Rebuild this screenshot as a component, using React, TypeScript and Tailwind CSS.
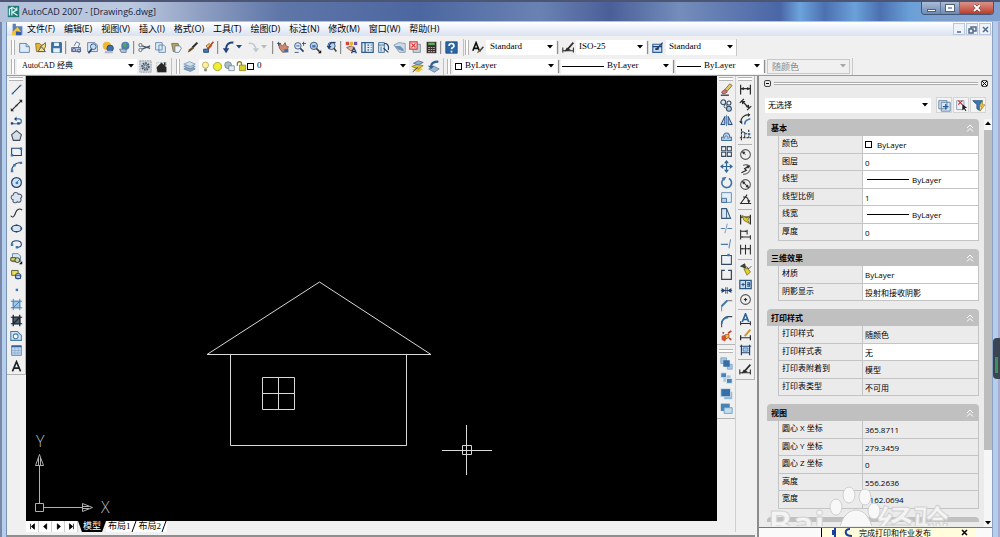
import type { ReactNode } from 'react'

const NAVY = '#23406f'
const BLUE = '#3b78b5'
const SKY = '#a9cbe8'
const DARK = '#2b2b2b'

const icons: Record<string, ReactNode> = {
  app: (
    <>
      <path d="M1 1h14v14H1z" fill="#1f7a78" />
      <path d="M3 13V5l3-2v10M7 3l5 3-5 3 6 4M12 3v4" stroke="#d9f3ec" strokeWidth="1.6" />
    </>
  ),
  doc: (
    <>
      <path d="M2 1h4v3h8v10H2z" fill="#5d7fb5" />
      <path d="M1 12 8 5l6 8-3 2H1z" fill="#f2c53c" />
      <path d="M6 10l7 1v4H6z" fill="#2f5aa8" />
    </>
  ),
  new: <path d="M2 3h8l4 4v7H2z M10 3v4h4" stroke="#52749b" fill="#dcecfa" />,
  open: (
    <>
      <path d="M2 3h5l2 2h4v8H3z" fill="#e5b437" stroke="#8d6b1c" />
      <path d="M7 8 14 2v6M5 13l4-6 5 6z" stroke="#3c4c5f" fill="#f8df80" />
    </>
  ),
  save: (
    <>
      <path d="M2 2h12v12H2z" fill="#3f74a8" stroke="#27527e" />
      <path d="M5 2h6v4H5zM4 9h8v5H4z" fill="#e7f1fa" />
    </>
  ),
  print: (
    <>
      <path d="M5 6 8 1l4 2-2 5" stroke="#4d5d86" fill="#eef3fb" />
      <path d="M2 8h11v5H2z" fill="#b8c3df" stroke="#4d5d86" />
      <circle cx="5" cy="11" r="2" stroke="#4d5d86" />
      <circle cx="11" cy="12" r="2" stroke="#4d5d86" />
    </>
  ),
  preview: (
    <>
      <path d="M2 2h9l3 3v8H2z" fill="#dbe8f6" stroke="#56749b" />
      <circle cx="9" cy="7" r="3.5" fill="#c4dff2" stroke={NAVY} />
      <path d="M7 10l-4 5" stroke={NAVY} strokeWidth="2" />
    </>
  ),
  publish: (
    <>
      <circle cx="6" cy="6" r="5" fill="#f0b832" />
      <circle cx="10" cy="9" r="4" fill="#3d6fae" stroke="#27446f" />
      <path d="M4 12h8l2 3H3z" fill="#b9b9c6" />
    </>
  ),
  globe: (
    <>
      <circle cx="9" cy="6" r="5" fill="#4b80b4" />
      <path d="M6 3c3-2 6 0 4 3s-3 2-4-3" fill="#5fa35a" />
      <path d="M2 10h8v4H4z" fill="#b7c6da" stroke="#5c6f88" />
    </>
  ),
  cut: (
    <>
      <path d="M5 6l10 3M5 10l10-4" stroke="#45566b" strokeWidth="1.500" />
      <circle cx="3" cy="5" r="2" stroke="#45566b" />
      <circle cx="3" cy="11" r="2" stroke="#45566b" />
    </>
  ),
  copy: <path d="M2 2h8v9H2zM6 5h6l2 2v7H6z" fill="#dcecfa" stroke="#5a7da4" />,
  paste: (
    <>
      <path d="M2 3h8l2 8-8 2z" fill="#b6a26a" stroke="#766a43" />
      <path d="M6 6h6l2 3-3 5H6z" fill="#edf3fa" stroke="#6b7b8d" />
    </>
  ),
  brush: (
    <>
      <path d="M8 8 14 2" stroke="#2b2b2b" strokeWidth="2.500" />
      <path d="M8 7l2 2-5 4-3 1 2-4z" fill="#6b4a27" />
    </>
  ),
  block: (
    <>
      <path d="M5 6l4-3 3 3-4 4z" fill="#e8c75c" stroke="#8b5a2b" />
      <path d="M14 1 7 10" stroke="#b5402a" strokeWidth="2" />
      <path d="M2 10h6v4H2z" fill={BLUE} stroke={NAVY} />
    </>
  ),
  undo: (
    <>
      <path d="M14 2C8 1 4 5 5 13" stroke="#24467c" strokeWidth="2.500" />
      <path d="M1 9h8l-4 6z" fill="#24467c" />
    </>
  ),
  redo: (
    <>
      <path d="M2 3c6-1 9 3 9 9" stroke="#c3c7cc" strokeWidth="2" />
      <path d="M7 9h8l-4 5z" fill="#c3c7cc" />
    </>
  ),
  pan: (
    <>
      <path d="M2 3l5 3 3-4 1 4 3 1-2 6-5 1-4-5z" fill="#c88b72" stroke="#8d4a3b" />
      <path d="M9 10h5v4H9z" fill="#3f6faa" />
      <path d="M2 1v5M0 3h5" stroke={NAVY} />
    </>
  ),
  zoomrt: (
    <>
      <circle cx="6" cy="6" r="4" fill="#d8eaf7" stroke={NAVY} />
      <path d="M9 9l4 4" stroke={NAVY} strokeWidth="2" />
      <path d="M13 1v5M11 3h5M4 6h4M2 14h5" stroke={NAVY} />
    </>
  ),
  zoomwin: (
    <>
      <circle cx="6" cy="6" r="4.500" fill="#b7d1e8" stroke={NAVY} />
      <path d="M4 5h4v3H4z" fill={BLUE} />
      <path d="M9 9l4 4" stroke="#444" strokeWidth="2" />
      <path d="M11 15h4v-4z" fill="#111" />
    </>
  ),
  zoomprev: (
    <>
      <circle cx="8" cy="6" r="4.500" fill="#b7d1e8" stroke={NAVY} />
      <path d="M13 2C8 1 5 3 5 8" stroke={NAVY} strokeWidth="1.500" />
      <path d="M2 6h6l-3 4z" fill={NAVY} />
      <path d="M11 9l3 4" stroke="#444" strokeWidth="2" />
    </>
  ),
  props: (
    <>
      <path d="M1 1h4v4H1z" fill="#d4413a" />
      <path d="M6 1h4v4H6z" fill="#e5b437" />
      <path d="M11 1h4v4h-4z" fill="#6f4bb0" />
      <path d="M2 8l6-2 4 4-5 2z" fill="#dfb49a" stroke="#75503e" />
      <path d="M8 15l3-7 3 7M9 13h4" stroke={NAVY} strokeWidth="1.500" />
    </>
  ),
  center: (
    <>
      <path d="M1 2h14v12H1z" fill="#e3eef8" stroke="#305d87" strokeWidth="1.500" />
      <path d="M5 2v12M8 5h2M12 5h1M8 8h2M12 8h1M8 11h2M12 11h1" stroke="#305d87" strokeWidth="1.500" />
    </>
  ),
  palettes: (
    <>
      <path d="M2 2h7v12H2z" fill="#dceaf6" stroke="#305d87" />
      <path d="M2 5h7M5 7v6" stroke="#305d87" />
      <path d="M9 3c4 0 6 3 5 8M8 9l6 5" stroke={NAVY} strokeWidth="1.500" />
    </>
  ),
  sheet: (
    <>
      <path d="M1 5l6-3 8 1v11H8z" fill="#d0dae6" stroke="#8292a5" />
      <path d="M2 6h7l4 4v3L6 10z" fill="#6d94ba" />
    </>
  ),
  markup: (
    <>
      <path d="M5 4h9v10H5z" fill="#c9d1dc" stroke="#7b8490" />
      <path d="M1 1h9v9H1z" fill="#fbe2e0" stroke="#d83a3a" strokeWidth="1.500" />
      <path d="M3 3l5 5M8 3 3 8" stroke="#d83a3a" strokeWidth="1.500" />
    </>
  ),
  calc: (
    <>
      <path d="M2 1h12v14H2z" fill="#39302e" />
      <path d="M4 2h8v3H4z" fill="#5bb25b" />
      <path d="M4 8h8M4 10.500h8M4 13h8" stroke="#d8a09a" strokeWidth="1.400" strokeDasharray="2 1" />
    </>
  ),
  help: (
    <>
      <path d="M1 1h14v14H1z" fill="#2a65a4" stroke="#1c477a" />
      <path d="M5 6c0-4 6-4 6 0 0 2-3 2-3 4M8 12v2" stroke="#fff" strokeWidth="2" />
    </>
  ),
  textstyle: (
    <>
      <path d="M1 12 5 2l4 10M3 9h5" stroke="#111" strokeWidth="2" />
      <path d="M9 13l5-6" stroke="#4a4a4a" strokeWidth="2" />
      <path d="M8 11l3 2-5 2z" fill="#8a6a3c" />
    </>
  ),
  dimstyle: (
    <>
      <path d="M1 8v6M14 8v6M1 12h13" stroke={DARK} strokeWidth="1.300" />
      <path d="M7 10 14 2" stroke={DARK} strokeWidth="2" />
      <path d="M3 13l3-5 5 3z" fill={DARK} />
    </>
  ),
  tablestyle: (
    <>
      <path d="M1 4h11v10H1z" fill="#c9def1" stroke="#2f62a0" strokeWidth="1.500" />
      <path d="M1 7h11M5 11l8-9" stroke={NAVY} strokeWidth="1.500" />
      <path d="M4 9l5-2-1 4H4z" fill={NAVY} />
    </>
  ),
  gear: (
    <>
      <path d="M1 1h14v14H1z" fill="#cfd6dc" stroke="#8a949d" strokeDasharray="2 1" />
      <circle cx="8" cy="8" r="4" stroke="#43566a" strokeWidth="2.500" strokeDasharray="2 1" />
      <circle cx="8" cy="8" r="2" stroke="#43566a" />
    </>
  ),
  home: (
    <>
      <path d="M2 3h12v12H2z" stroke="#9aa" strokeDasharray="1 1" />
      <path d="M2 9l6-6 6 6v6H3z" fill="#262626" />
      <path d="M11 3h2v4h-2z" fill="#262626" />
    </>
  ),
  layers: (
    <>
      <path d="M1 11l7-3 7 3-6 3z" fill="#8da9c8" stroke="#60809f" />
      <path d="M1 8l7-3 7 3-6 3z" fill="#aec5dc" stroke="#60809f" />
      <path d="M1 5l7-3 7 3-6 3z" fill="#d3e1ee" stroke="#7f9ab5" />
    </>
  ),
  bulb: (
    <>
      <circle cx="8" cy="6" r="4.500" fill="#fbf39a" stroke="#a89842" />
      <path d="M6 11h4v4H6z" fill="#8b8b8b" />
    </>
  ),
  sun: <circle cx="8" cy="8" r="6" fill="#f0ee2e" stroke="#8b8a20" />,
  vpfreeze: (
    <>
      <circle cx="6" cy="6" r="5" fill="#a9bfca" stroke="#5e7886" />
      <path d="M7 7h8v7H7z" fill="#e6edf3" stroke="#5e7886" />
    </>
  ),
  lock: (
    <>
      <path d="M2 7V4c0-4 6-4 6 0v3" stroke="#8b8420" strokeWidth="2" />
      <path d="M5 6h9v8H5z" fill="#d8cf2e" stroke="#807a1c" />
    </>
  ),
  layercur: (
    <>
      <path d="M1 12l7-3 7 2-6 4z" fill="#e8c93a" />
      <path d="M1 8l7-3 7 2-6 4z" fill="#d8bd3f" stroke="#8b8137" />
      <path d="M3 4l6-3 6 2-6 3z" fill="#93b2d0" stroke="#507090" />
      <path d="M2 15l6-6" stroke={DARK} />
    </>
  ),
  layerprev: (
    <>
      <path d="M2 11l7-3 6 3-6 4z" fill="#9bb5cf" stroke="#5c7d9e" />
      <path d="M14 2c-7 0-9 2-9 6" stroke="#315f93" strokeWidth="2.500" />
      <path d="M1 7h8l-4 4z" fill="#315f93" />
    </>
  ),

  line: (
    <>
      <path d="M3 13 13 3" stroke={NAVY} strokeWidth="1.300" />
      <path d="M2 12h2v2H2zM12 2h2v2h-2z" fill={BLUE} />
    </>
  ),
  xline: (
    <>
      <path d="M2 14 14 2" stroke={DARK} strokeWidth="1.500" />
      <path d="M1 11v4h4zM11 1h4v4zM7 7h2v2H7z" fill={DARK} />
    </>
  ),
  pline: (
    <>
      <path d="M2 12h9c4 0 4-6 0-6H7" stroke={BLUE} strokeWidth="1.500" />
      <path d="M1 10h3v3H1zM9 10h3v3H9zM8 3v6L5 6z" fill={NAVY} />
    </>
  ),
  polygon: <path d="M8 2l6 5-2 7H4L2 7z" fill="#d6dfe8" stroke="#3f4a57" strokeWidth="1.300" />,
  rect: (
    <>
      <path d="M2 4h12v9H2z" fill="#edf3f9" stroke={NAVY} strokeWidth="1.300" />
      <path d="M1 11h3v3H1zM12 3h3v3h-3z" fill={BLUE} />
    </>
  ),
  arc: (
    <>
      <path d="M2 14C2 8 6 3 14 3" stroke={NAVY} strokeWidth="1.300" />
      <path d="M1 12h3v3H1zM4 5h3v3H4zM12 2h3v3h-3z" fill={BLUE} />
    </>
  ),
  circle: (
    <>
      <circle cx="8" cy="8" r="6" fill="#d3e5f3" stroke={NAVY} strokeWidth="1.500" />
      <path d="M8 8l4-4" stroke={BLUE} />
      <path d="M7 7h3v3H7z" fill={BLUE} />
    </>
  ),
  revcloud: <path d="M4 5c0-4 6-4 6-1 4-1 6 3 3 5 2 4-2 6-4 4-2 3-7 1-5-2-4-1-3-6 0-6z" fill="#dbe3ef" stroke="#4b5a78" strokeWidth="1.300" />,
  spline: <path d="M1 12c3 4 5-1 6-4s4-6 8-3" stroke={DARK} strokeWidth="1.300" />,
  ellipse: (
    <>
      <ellipse cx="8" cy="8" rx="6" ry="4" fill="#d9e6f1" stroke={NAVY} strokeWidth="1.500" />
      <path d="M1 7h2v2H1zM13 7h2v2h-2zM7 3h2v2H7zM7 11h2v2H7z" fill={NAVY} />
    </>
  ),
  ellarc: (
    <>
      <path d="M2 9c0-6 12-6 12 0 0 3-3 4-6 4" stroke={NAVY} strokeWidth="1.300" />
      <path d="M1 8h3v3H1zM7 11h3v3H7z" fill={BLUE} />
    </>
  ),
  insert: (
    <>
      <path d="M3 2h7l3 3v7H3z" fill="#d7e6f3" stroke="#54759a" />
      <path d="M1 7h6v4H1z" fill="#e9dd55" stroke={DARK} />
      <circle cx="9" cy="10" r="3" fill="#c7d9a6" stroke={DARK} />
      <path d="M11 15h4v-4z" fill="#111" />
    </>
  ),
  mkblock: (
    <>
      <path d="M2 3h8v6H2z" fill="#e9dd55" stroke="#3b4d2b" />
      <circle cx="10" cy="10" r="3.500" fill="#b7cfe6" stroke={NAVY} />
      <path d="M7 9h6v4H7z" stroke={NAVY} />
    </>
  ),
  point: <path d="M7 7h3v3H7z" fill={BLUE} />,
  hatch: (
    <>
      <path d="M3 3h10v10H3z" fill="#9fc4e6" />
      <path d="M1 4h14M1 12h14M4 1v14M12 1v14M4 12l8-8" stroke="#4677a8" />
    </>
  ),
  gradient: (
    <>
      <path d="M3 3h10v10H3z" fill="#56616e" />
      <path d="M1 4h14M1 12h14M4 1v14M12 1v14M4 12l8-8" stroke="#1e2732" strokeWidth="1.500" />
    </>
  ),
  region: (
    <>
      <path d="M1 3h8l5 5v6H1z" fill="#d5e6f4" stroke="#487ba9" strokeWidth="1.300" />
      <circle cx="7" cy="9" r="3" fill="#fff" stroke="#487ba9" strokeWidth="1.300" />
    </>
  ),
  table: (
    <>
      <path d="M2 2h12v12H2z" fill="#c3d6ee" stroke="#5379a8" />
      <path d="M2 3h12" stroke="#365f96" strokeWidth="2" />
      <path d="M6 4v10M10 4v10M2 8h12M2 11h12" stroke="#8daed2" />
    </>
  ),
  mtext: <path d="M3 14 8 2l5 12M5 10h6" stroke="#222" strokeWidth="2" />,

  erase: (
    <>
      <path d="M6 8 12 1l3 2-6 7z" fill="#e3c46a" stroke="#7a6a30" />
      <path d="M2 11l4-3 3 3-3 2H3z" fill="#d8777a" stroke="#804040" />
      <path d="M1 15h10" stroke={DARK} strokeWidth="1.500" />
    </>
  ),
  copyobj: (
    <>
      <circle cx="4" cy="4" r="3" fill="#dbe6f0" stroke="#34495f" strokeWidth="1.300" />
      <circle cx="11" cy="5" r="2.500" stroke="#34495f" strokeWidth="1.300" />
      <circle cx="7" cy="9" r="2" stroke="#34495f" />
      <circle cx="11" cy="12" r="3" fill={SKY} stroke="#34495f" strokeWidth="1.300" />
    </>
  ),
  mirror: (
    <>
      <path d="M6 3v10H1zM10 3v10h5z" fill="#b6cfe6" stroke={NAVY} strokeWidth="1.200" />
      <path d="M8 1v14" stroke={BLUE} />
    </>
  ),
  offset: (
    <>
      <path d="M2 13V9h2c0-7 8-7 8 0h2v4z" fill="#b8d0e7" stroke="#42719f" strokeWidth="1.300" />
      <path d="M5 11c0-5 5-5 5 0" stroke="#42719f" />
    </>
  ),
  array: <path d="M2 2h5v5H2zM9 2h5v5H9zM2 9h5v5H2zM9 9h5v5H9z" fill="#edf2f8" stroke="#34495f" strokeWidth="1.300" />,
  move: (
    <>
      <path d="M8 2v12M2 8h12" stroke="#2f6599" strokeWidth="1.500" />
      <path d="M5 4l3-4 3 4zM5 12l3 4 3-4zM4 5 0 8l4 3zM12 5l4 3-4 3z" fill="#2f6599" />
    </>
  ),
  rotate: (
    <>
      <path d="M4 4a6 6 0 1 0 7-1" stroke="#3f74a8" strokeWidth="2" />
      <path d="M2 2l6-1-3 5z" fill="#3f74a8" />
    </>
  ),
  scale: (
    <>
      <path d="M2 2h12v12H2z" fill="#e4eef7" stroke="#537ea9" />
      <path d="M2 9h6v5H2z" fill="#b8d2ea" stroke="#315f93" />
    </>
  ),
  stretch: (
    <>
      <path d="M2 2h6l5 12H2z" fill="#d8e6f3" stroke="#34557a" strokeWidth="1.300" />
      <path d="M8 2v12" stroke="#34557a" />
    </>
  ),
  trim: (
    <>
      <path d="M1 8h5M9 8h6" stroke="#547ba2" strokeWidth="1.300" />
      <path d="M9 2 6 14" stroke="#6a8cad" />
    </>
  ),
  extend: (
    <>
      <path d="M1 9h9" stroke="#315f93" strokeWidth="1.300" />
      <path d="M13 3l-2 11" stroke="#6a8cad" strokeWidth="1.300" />
    </>
  ),
  breakpt: (
    <>
      <path d="M2 3h12v11H2z" fill="#edf2f7" stroke="#34495f" strokeWidth="1.300" />
      <path d="M9 1h3v3H9z" fill={BLUE} />
    </>
  ),
  break: <path d="M6 3H2v11h12V3h-4" stroke="#34495f" strokeWidth="1.500" />,
  join: (
    <>
      <path d="M1 8h14M7 4v8M9 4v8" stroke={NAVY} />
      <path d="M2 5l5 3-5 3zM14 5L9 8l5 3z" fill={NAVY} />
    </>
  ),
  chamfer: (
    <>
      <path d="M2 15V8l6-6h7" stroke="#8a8a8a" strokeWidth="1.300" />
      <path d="M2 9l7-7" stroke={BLUE} strokeWidth="2" />
    </>
  ),
  fillet: (
    <>
      <path d="M2 15v-4c0-5 4-9 8-9h5" stroke="#34495f" strokeWidth="1.300" />
      <path d="M2 11c0-5 4-8 8-8" stroke="#2f6fb0" strokeWidth="2" />
    </>
  ),
  explode: (
    <>
      <path d="M2 7l4-1 3 3-3 5-4-2z" fill="#d4502f" />
      <path d="M6 6l5-1v4l-4 2z" fill="#efc13c" stroke="#a4492c" />
      <path d="M10 4l4-3M11 10l3 2M3 3l2 1" stroke="#b2402b" strokeWidth="2" />
    </>
  ),
  front: (
    <>
      <path d="M1 1h7v7H1zM9 9h6v6H9z" fill="#a8c8e2" stroke="#7ba4c8" />
      <path d="M4 4h8v8H4z" fill="#356fa5" />
    </>
  ),
  back: (
    <>
      <path d="M4 4h9v8H4z" fill="#a8c8e2" />
      <path d="M1 1h7v6H1zM8 8h7v6H8z" fill="#4a82b4" stroke="#e7f0f8" />
    </>
  ),
  above: (
    <>
      <path d="M5 6h10v9H5z" fill="#8fb7d8" />
      <path d="M1 2h12v10H1z" fill="#356fa5" stroke="#dbe8f3" />
    </>
  ),
  under: (
    <>
      <path d="M1 2h11v9H1z" fill="#4a82b4" />
      <path d="M5 7h10v7H5z" fill="#c3dcef" stroke="#6796be" />
    </>
  ),

  dimlin: (
    <>
      <path d="M2 2v12M14 2v12M2 7h12" stroke={DARK} strokeWidth="1.500" />
      <path d="M2 7l4-2v4zM14 7l-4-2v4z" fill={DARK} />
    </>
  ),
  dimali: (
    <>
      <path d="M4 4l8 8M1 6l5-5M10 15l5-5" stroke={DARK} strokeWidth="1.500" />
      <path d="M3 3l5 1-4 4zM13 12l-5-1 4-3z" fill={DARK} />
    </>
  ),
  dimarc: (
    <>
      <path d="M2 12C2 6 6 2 13 2" stroke={DARK} strokeWidth="1.500" />
      <path d="M7 14c0-4 2-6 7-7" stroke={BLUE} strokeWidth="2" />
      <path d="M0 10h4v4zM11 0v5l3-3z" fill={DARK} />
    </>
  ),
  dimord: (
    <>
      <path d="M3 1v14M1 12h14M3 5h4v7M7 7h5v5M12 2v5" stroke={DARK} strokeDasharray="3 1" strokeWidth="1.300" />
      <path d="M6 6h2v2H6zM11 6h3v3h-3z" fill={BLUE} />
    </>
  ),
  dimrad: (
    <>
      <circle cx="8" cy="8" r="6" stroke="#555" strokeWidth="1.300" />
      <path d="M8 8 4 5" stroke={DARK} />
      <path d="M4 4l4 1-3 3z" fill={DARK} />
    </>
  ),
  dimjog: (
    <>
      <path d="M5 3c6-3 11 2 8 7-2 3-5 4-8 4" stroke="#777" strokeWidth="1.300" />
      <path d="M3 12l6-3-2-2 5-3" stroke={DARK} strokeWidth="1.500" />
      <path d="M9 3h5l-3 4z" fill={DARK} />
    </>
  ),
  dimdia: (
    <>
      <circle cx="8" cy="8" r="6" stroke="#555" strokeWidth="1.300" />
      <path d="M4 4l8 8" stroke={DARK} strokeWidth="1.300" />
      <path d="M4 4l4 1-3 3zM12 12l-4-1 3-3z" fill={DARK} />
    </>
  ),
  dimang: (
    <>
      <path d="M10 2 2 13h13M5 5c5-1 7 2 7 7" stroke={DARK} strokeWidth="1.300" />
      <path d="M10 9h4l-2 4z" fill={DARK} />
    </>
  ),
  qdim: (
    <>
      <path d="M2 2v12M14 2v12M2 5h12" stroke={DARK} strokeWidth="1.500" />
      <path d="M4 3l5 3 4-2-2 5 2 4-7-4z" fill="#e4c928" stroke="#6e6a24" />
    </>
  ),
  dimbase: <path d="M2 2v12M10 2v6M14 9v5M2 4h8M2 11h12M8 3v2M4 10v2" stroke={DARK} strokeWidth="1.300" />,
  dimcont: <path d="M2 2v12M8 2v12M14 2v12M2 7h12M4 6v2M12 6v2" stroke={DARK} strokeWidth="1.300" />,
  qleader: (
    <>
      <path d="M2 4l5-3 1 5z" fill="#2f5a1c" stroke={DARK} />
      <path d="M6 7h5l3 4-4 4z" fill="#e5d32a" stroke="#6e6a24" />
      <path d="M8 4l4 3 3-3" stroke={DARK} />
    </>
  ),
  tolerance: (
    <>
      <path d="M1 3h14v10H1z" fill="#c8ddf0" stroke="#29577f" strokeWidth="1.500" />
      <path d="M8 3v10M3 8h4M5 6v4M10 6h3v4h-3M10 8h3" stroke="#29577f" strokeWidth="1.300" />
    </>
  ),
  cmark: (
    <>
      <circle cx="8" cy="8" r="6" stroke="#555" strokeWidth="1.300" />
      <path d="M8 6v4M6 8h4" stroke={DARK} strokeWidth="1.500" />
    </>
  ),
  dimedit: (
    <>
      <path d="M4 11 8 1l4 10M6 8h4" stroke="#28619b" strokeWidth="2" />
      <path d="M2 10v5M14 10v5M2 13h12" stroke={DARK} strokeWidth="1.300" />
    </>
  ),
  dimtedit: (
    <>
      <path d="M2 9v6M14 9v6M2 12h12" stroke={DARK} strokeWidth="1.500" />
      <path d="M7 10 14 2" stroke="#c99a38" strokeWidth="2.500" />
    </>
  ),
  dimupdate: (
    <>
      <path d="M5 6h6v4H5z" fill={SKY} stroke={BLUE} />
      <path d="M3 2v13M13 2v13M1 4h14M3 12h10" stroke={NAVY} strokeWidth="1.500" />
    </>
  ),
  pickadd: (
    <>
      <path d="M1 2h10v10H1zM4 4h11v11H4z" fill="#d8e7f5" stroke="#54789d" />
      <path d="M9.500 6v7M6 9.500h7" stroke="#245c98" strokeWidth="1.500" />
    </>
  ),
  pick: (
    <>
      <path d="M2 2h9v11H2z" fill="#f1f2f8" stroke="#8591a9" />
      <path d="M4 2l5 5M9 2 4 7" stroke="#d13333" strokeWidth="1.500" />
      <path d="M9 6v8l2-2 2 3 1-1-2-3h3z" fill="#222" />
    </>
  ),
  quick: (
    <>
      <path d="M1 2h12l-4 5v7l-3-2V7z" fill="#3b78b5" stroke="#27527e" />
      <path d="M13 3l-4 6h3l-2 6 6-8h-3z" fill="#f0c92c" stroke="#92741a" strokeWidth=".7" />
    </>
  ),
}

function Icon({ name, className = 'h-[13px] w-[13px]' }: { name: string; className?: string }) {
  return (
    <svg viewBox="0 0 16 16" fill="none" className={`shrink-0 ${className}`}>
      {icons[name]}
    </svg>
  )
}

function Tool({ name }: { name: string }) {
  return (
    <button aria-label={name} className="flex h-[15px] w-4 shrink-0 items-center justify-center">
      <Icon name={name} />
    </button>
  )
}

const Tools = ({ names }: { names: string[] }) => (
  <>
    {names.map((n) => (
      <Tool key={n} name={n} />
    ))}
  </>
)

const Sep = () => <div className="mx-[1px] h-[13px] w-[2px] shrink-0 border-l border-[#8f8f8f] bg-[#dcdcdc]" />
const Grip = () => <div className="mx-px h-[15px] w-[4px] shrink-0 border-x border-[#b4b4b4] bg-white" />
const HGrip = () => <div className="my-px h-[4px] w-[14px] shrink-0 border-y border-[#b4b4b4] bg-white" />
const HSep = () => <div className="my-[2px] h-px w-[14px] shrink-0 bg-[#b0b0b0]" />

function Caret({ className = 'text-black' }: { className?: string }) {
  return (
    <svg viewBox="0 0 6 4" className={`h-[4px] w-[6px] shrink-0 ${className}`}>
      <path d="M0 0h6L3 3.500z" fill="currentColor" />
    </svg>
  )
}

type ComboProps = {
  label: string
  value: string
  className: string
  textClass?: string
  disabled?: boolean
  children?: ReactNode
}

const serif = 'font-["Liberation_Serif","Noto_Sans_CJK_SC",serif] text-[9px]'

function Combo({ label, value, className, textClass = serif, disabled, children }: ComboProps) {
  return (
    <div
      className={`flex h-[15px] shrink-0 items-center gap-[3px] pr-[3px] ${
        disabled ? 'border border-[#c8c8c8] bg-[#f0f0f0] text-[#8a8a8a]' : 'bg-white text-black'
      } ${className}`}
    >
      {children}
      <select
        aria-label={label}
        disabled={disabled}
        className={`h-full min-w-0 flex-1 appearance-none bg-transparent outline-none ${textClass}`}
      >
        <option>{value}</option>
      </select>
      <Caret className={disabled ? 'text-[#a8a8a8]' : 'text-black'} />
    </div>
  )
}

const menus = [
  '文件(F)',
  '编辑(E)',
  '视图(V)',
  '插入(I)',
  '格式(O)',
  '工具(T)',
  '绘图(D)',
  '标注(N)',
  '修改(M)',
  '窗口(W)',
  '帮助(H)',
]

const drawTools = [
  'line', 'xline', 'pline', 'polygon', 'rect', 'arc', 'circle', 'revcloud', 'spline', 'ellipse',
  'ellarc', 'insert', 'mkblock', 'point', 'hatch', 'gradient', 'region', 'table', 'mtext',
]

const modifyTools = [
  'erase', 'copyobj', 'mirror', 'offset', 'array', 'move', 'rotate', 'scale', 'stretch', 'trim',
  'extend', 'breakpt', 'break', 'join', 'chamfer', 'fillet', 'explode',
]

const dimTools = [
  ['dimlin', 'dimali', 'dimarc', 'dimord'],
  ['dimrad', 'dimjog', 'dimdia', 'dimang'],
  ['qdim', 'dimbase', 'dimcont'],
  ['qleader', 'tolerance', 'cmark'],
  ['dimedit', 'dimtedit', 'dimupdate'],
  ['dimstyle'],
]

type Row = { label: string; value: string; mark?: 'box' | 'line'; locked?: boolean }

const sections: { title: string; rows: Row[] }[] = [
  {
    title: '基本',
    rows: [
      { label: '颜色', value: 'ByLayer', mark: 'box' },
      { label: '图层', value: '0' },
      { label: '线型', value: 'ByLayer', mark: 'line' },
      { label: '线型比例', value: '1' },
      { label: '线宽', value: 'ByLayer', mark: 'line' },
      { label: '厚度', value: '0' },
    ],
  },
  {
    title: '三维效果',
    rows: [
      { label: '材质', value: 'ByLayer' },
      { label: '阴影显示', value: '投射和接收阴影' },
    ],
  },
  {
    title: '打印样式',
    rows: [
      { label: '打印样式', value: '随颜色', locked: true },
      { label: '打印样式表', value: '无' },
      { label: '打印表附着到', value: '模型', locked: true },
      { label: '打印表类型', value: '不可用', locked: true },
    ],
  },
  {
    title: '视图',
    rows: [
      { label: '圆心 X 坐标', value: '365.8711', locked: true },
      { label: '圆心 Y 坐标', value: '279.3459', locked: true },
      { label: '圆心 Z 坐标', value: '0', locked: true },
      { label: '高度', value: '556.2636', locked: true },
      { label: '宽度', value: '1162.0694', locked: true },
    ],
  },
]

function TitleBar() {
  return (
    <header className="flex h-[22px] shrink-0 items-start border-t-2 border-b border-t-[#4c5574] border-b-[#a9c3e6] bg-[linear-gradient(90deg,#b3c0da_0,#bccae0_130px,#8f9fc2_200px,#5f76a8_280px,#4c66a0_420px,#6a82b3_540px,#4a5f98_610px,#748dbb_680px,#4a66a6_780px,#6da3dc_800px,#4c70b0_825px,#6ba1da_855px,#4c70b0_880px,#6aa0d8_910px,#7fa0cf_940px)] pl-[7px]">
      <div className="mt-[3px] flex items-center gap-[2px]">
        <Icon name="app" />
        <h1 className="text-[9px] leading-[13px] text-[#15233b]">AutoCAD 2007 - [Drawing6.dwg]</h1>
      </div>
      <div className="mr-[6px] ml-auto flex h-[13px] overflow-hidden rounded-b border border-t-0 border-[#3f5678] text-white">
        <button
          aria-label="最小化"
          className="flex w-[19px] items-center justify-center border-r border-[#5d7599] bg-linear-to-b from-[#a9bcd6] to-[#6e8ab3]"
        >
          <span className="mt-1 h-[3px] w-[9px] border border-[#51617a] bg-white" />
        </button>
        <button
          aria-label="还原"
          className="flex w-[19px] items-center justify-center border-r border-[#5d7599] bg-linear-to-b from-[#a9bcd6] to-[#6e8ab3]"
        >
          <span className="h-[6px] w-[8px] border-2 border-white outline outline-[#51617a]" />
        </button>
        <button
          aria-label="关闭"
          className="flex w-[33px] items-center justify-center bg-linear-to-b from-[#d9938a] to-[#bb3726]"
        >
          <svg viewBox="0 0 8 8" className="h-2 w-2">
            <path d="M1 1l6 6M7 1 1 7" stroke="#5f2520" strokeWidth="3" />
            <path d="M1 1l6 6M7 1 1 7" stroke="#fff" strokeWidth="2" />
          </svg>
        </button>
      </div>
    </header>
  )
}

function MenuBar() {
  return (
    <nav className="flex h-[14px] shrink-0 items-center bg-linear-to-b from-white to-[#d9e2f2] pl-[4px] text-[9px] leading-[12px]">
      <Icon name="doc" />
      <div className="ml-[3px] flex gap-[9px]">
        {menus.map((m) => (
          <button key={m} className="whitespace-nowrap">
            {m}
          </button>
        ))}
      </div>
      <div className="ml-auto flex gap-px pr-px text-[#53698c]">
        {['M2 7h4', 'M1 4h4v4H1zM3 4V2h5v4H5', 'M2 2l5 5M7 2 2 7'].map((d) => (
          <button key={d} aria-label="文档窗口" className="flex h-3 w-3 items-center justify-center border border-[#b9c8de] bg-[#eef3fb]">
            <svg viewBox="0 0 9 9" className="h-[9px] w-[9px]" fill="none">
              <path d={d} stroke="currentColor" strokeWidth="1.500" />
            </svg>
          </button>
        ))}
      </div>
    </nav>
  )
}

function Toolbars() {
  return (
    <div className="flex shrink-0 flex-col gap-px border-b border-[#9a9a9a] pt-[2px]">
      <div className="flex h-[18px] items-center">
        <div className="flex items-center border-r border-[#c9c9c9] pl-[3px]">
          <Grip />
          <Tools names={['new', 'open', 'save']} />
          <Sep />
          <Tools names={['print', 'preview', 'publish', 'globe']} />
          <Sep />
          <Tools names={['cut', 'copy', 'paste', 'brush', 'block']} />
          <Sep />
          <Tool name="undo" />
          <Caret className="mr-[3px] text-[#24467c]" />
          <Tool name="redo" />
          <Caret className="mr-[4px] text-[#b9b9b9]" />
          <Sep />
          <Tools names={['pan', 'zoomrt', 'zoomwin', 'zoomprev']} />
          <Sep />
          <Tools names={['props', 'center', 'palettes', 'sheet', 'markup', 'calc']} />
          <Sep />
          <Tool name="help" />
          <div className="ml-[4px] h-[17px] w-px bg-[#c0c0c0]" />
          <Grip />
          <Tool name="textstyle" />
          <Combo label="文字样式" value="Standard" className="w-[70px] pl-[4px]" />
          <Sep />
          <Tool name="dimstyle" />
          <Combo label="标注样式" value="ISO-25" className="w-[70px] pl-[3px]" />
          <Sep />
          <Tool name="tablestyle" />
          <Combo label="表格样式" value="Standard" className="w-[70px] pl-[3px]" />
        </div>
      </div>
      <div className="flex h-[18px] items-center">
        <div className="flex items-center border-r border-[#c9c9c9] pl-[3px]">
          <Grip />
          <Combo
            label="工作空间"
            value="AutoCAD 经典"
            className="ml-px w-[120px] pl-[5px]"
            textClass='font-["Liberation_Serif","Noto_Sans_CJK_SC",serif] text-[8px]'
          />
          <Tools names={['gear', 'home']} />
          <div className="ml-[2px] h-[17px] w-px bg-[#c0c0c0]" />
          <div className="w-[3px]" />
          <Grip />
          <Tool name="layers" />
          <div className="ml-[2px] flex h-[15px] items-center bg-white">
            {['bulb', 'sun', 'vpfreeze', 'lock'].map((n) => (
              <span key={n} className="flex w-[12px] justify-center">
                <Icon name={n} className="h-[11px] w-[11px]" />
              </span>
            ))}
            <span className="h-[7px] w-[7px] border border-black" />
            <Combo label="图层" value="0" className="w-[155px] pl-[3px]" />
          </div>
          <Tools names={['layercur', 'layerprev']} />
          <div className="ml-[2px] h-[17px] w-px bg-[#c0c0c0]" />
          <div className="w-[2px]" />
          <Grip />
          <Combo label="颜色" value="ByLayer" className="ml-px w-[104px] gap-[2px] pl-[2px]">
            <span className="h-[7px] w-[7px] border border-black" />
          </Combo>
          <Sep />
          <Combo label="线型" value="ByLayer" className="w-[111px]">
            <span className="ml-px h-px w-[42px] bg-black" />
          </Combo>
          <Sep />
          <Combo label="线宽" value="ByLayer" className="w-[87px]">
            <span className="ml-px h-px w-[24px] bg-black" />
          </Combo>
          <Sep />
          <Combo label="打印样式" value="随颜色" className="mr-[2px] w-[83px] pl-[4px]" textClass="text-[9px]" disabled />
        </div>
      </div>
    </div>
  )
}

function Drawing() {
  return (
    <svg
      viewBox="26 76 690 445"
      preserveAspectRatio="xMinYMax meet"
      className="min-h-0 w-full flex-1 bg-black"
      fill="none"
      stroke="#d8d8d8"
    >
      <path d="M207 354.500 319.500 282 431 354.500z" />
      <path d="M230.500 354.500h176v91h-176z" />
      <path d="M262.500 377.500h32v32h-32zM278.500 377.500v32M262.500 393.500h32" />
      <path d="M466.500 425v50M442 450.500h50M462.500 445.500h9v9h-9z" />
      <g stroke="#b0b0b0">
        <path d="M35.500 503.500h8v8h-8zM39.500 503v-38M43 507.500h39" />
        <path d="M35.500 465.500h8l-4-11zM82.500 503.500v8l10-4zM38.500 458v7M40.500 458v7M83 506.500h6M83 508.500h6" />
      </g>
      <g fill="#b8b8b8" stroke="none" className='font-["Open_Sans",sans-serif] text-[16px] font-light'>
        <text x="36" y="447">Y</text>
        <text x="101" y="513">X</text>
      </g>
    </svg>
  )
}

function LayoutTabs() {
  const nav = ['M2 1v7M7 1 3 4.500 7 8z', 'M6 1 2 4.500 6 8z', 'M3 1l4 3.500L3 8z', 'M7 1v7M2 1l4 3.500L2 8z']
  return (
    <div className={`flex h-[11px] shrink-0 items-center bg-[#f0f0f0] ${serif}`}>
      {nav.map((d) => (
        <button key={d} aria-label="切换布局" className="flex h-[11px] w-[13px] items-center justify-center border-r border-[#d0d0d0] bg-white">
          <svg viewBox="0 0 9 9" className="h-[7px] w-[7px]" stroke="#000">
            <path d={d} />
          </svg>
        </button>
      ))}
      <button className="h-[11px] bg-black px-[5px] leading-[11px] text-white [clip-path:polygon(0_0,100%_0,calc(100%-4px)_100%,4px_100%)]">
        模型
      </button>
      {['布局1', '布局2'].map((t) => (
        <div key={t} className="flex items-center bg-white">
          <button className="h-[11px] pl-[2px] leading-[11px]">{t}</button>
          <svg viewBox="0 0 6 11" className="h-[11px] w-[6px]">
            <path d="M1 11 5 0" stroke="#000" />
          </svg>
        </div>
      ))}
    </div>
  )
}

function PropertySection({ title, rows }: { title: string; rows: Row[] }) {
  return (
    <section className="mb-2">
      <button className="flex h-[17px] w-full items-center justify-between rounded-t bg-[#c0c0c0] pr-[5px] pl-[4px] font-bold">
        {title}
        <svg viewBox="0 0 8 8" className="h-2 w-2" fill="none" stroke="#fff">
          <path d="M1 4l3-3 3 3M1 7.500l3-3 3 3" />
        </svg>
      </button>
      <div className="pl-[11px]">
        <table className="w-full table-fixed border-separate border-spacing-0 border-l border-[#c4c4c4]">
          <tbody>
            {rows.map((r) => (
              <tr key={r.label} className="h-[17px] odd:h-[18px]">
                <th className="w-[84px] border-r border-b border-[#c4c4c4] p-0 pl-[3px] text-left align-top leading-[14px] font-normal">
                  {r.label}
                </th>
                <td className={`border-r border-b border-[#c4c4c4] p-0 pl-[2px] ${r.locked ? '' : 'bg-white'}`}>
                  <div className="flex items-center">
                    {r.mark === 'box' && <span className="mr-[5px] h-[7px] w-[7px] border border-black" />}
                    {r.mark === 'line' && <span className="mr-[3px] ml-[2px] h-px w-[42px] bg-black" />}
                    <input
                      aria-label={r.label}
                      defaultValue={r.value}
                      readOnly={r.locked}
                      className="h-[14px] min-w-0 flex-1 bg-transparent outline-none"
                    />
                  </div>
                </td>
              </tr>
            ))}
          </tbody>
        </table>
      </div>
    </section>
  )
}

function Watermark() {
  return (
    <div className="pointer-events-none absolute right-6 bottom-[11px] left-[9px] h-[40px] overflow-hidden">
      <svg viewBox="0 0 54 40" className="absolute top-0 left-[60px] h-[40px] w-[54px]" fill="#f8f8f8" stroke="#cfcfcf">
        <ellipse cx="8" cy="21" rx="6" ry="8" />
        <ellipse cx="21" cy="9" rx="6" ry="8" />
        <ellipse cx="37" cy="11" rx="6" ry="8" />
        <ellipse cx="46" cy="25" rx="6" ry="8" />
        <path d="M28 24c9 0 15 10 16 18H12c1-8 7-18 16-18z" />
      </svg>
      <div className="absolute top-[16px] left-0 flex gap-[52px] text-[36px] leading-[44px] font-bold text-[#f4f4f4] [-webkit-text-stroke:1px_#d2d2d2]">
        <span>Bai</span>
        <span>经验</span>
      </div>
    </div>
  )
}

function PropertiesPalette() {
  return (
    <aside className="relative flex w-[235px] shrink-0 flex-col overflow-hidden border-l-2 border-[#8c8c8c] bg-[#ebebeb] text-[8px]">
      <div className="flex h-[15px] shrink-0 items-center gap-[3px] pr-1 pl-[5px]">
        <button aria-label="折叠" className="flex h-[7px] w-[7px] items-center justify-center rounded-xs border border-[#444]">
          <span className="h-px w-[3px] bg-black" />
        </button>
        <div className="h-[3px] flex-1 border-y border-[#aaa] bg-white" />
        <button aria-label="关闭特性" className="h-[7px] w-[7px] rounded-xs border border-[#444]">
          <svg viewBox="0 0 5 5" stroke="#000">
            <path d="M0 0l5 5M5 0 0 5" />
          </svg>
        </button>
      </div>
      <div className="flex h-[28px] shrink-0 items-center px-[6px]">
        <Combo label="选择" value="无选择" className="min-w-0 flex-1 shrink pl-[3px]" textClass="text-[8px]" />
        <div className="ml-[5px] flex gap-px">
          {['pickadd', 'pick', 'quick'].map((n) => (
            <button key={n} aria-label={n} className="flex h-4 w-4 items-center justify-center border border-[#d5d5d5] bg-[#f4f4f4]">
              <Icon name={n} />
            </button>
          ))}
        </div>
      </div>
      <div className="flex min-h-0 flex-1">
        <div className="min-w-0 flex-1 overflow-hidden pl-[8px]">
          {sections.map((s) => (
            <PropertySection key={s.title} {...s} />
          ))}
          <div className="h-[5px] rounded-t bg-[#c0c0c0]" />
        </div>
        <div className="ml-[5px] flex w-[8px] shrink-0 flex-col items-center bg-[#f6f6f6] pt-[2px]">
          <Caret className="rotate-180" />
          <div className="mt-[5px] h-[320px] w-full bg-[#bdbdbd]" />
          <Caret className="mt-auto mb-[2px]" />
        </div>
      </div>
      <div className="flex h-[10px] shrink-0 items-start border-t border-[#777] bg-[#fafafa] pl-[62px]">
        <div className="mr-4 flex h-[9px] flex-1 items-center gap-[5px] border-l border-black bg-[#fffddb] pl-2 leading-[9px]">
          <svg viewBox="0 0 24 9" className="h-[9px] w-6" fill="none" stroke="#1c3f9c" strokeWidth="2">
            <path d="M5 0v9M3 2v5M20 1c-6 0-6 7 2 7" />
          </svg>
          <span>完成打印和作业发布</span>
          <svg viewBox="0 0 7 7" className="mr-2 ml-auto h-[7px] w-[7px]" stroke="#000" strokeWidth="1.500">
            <path d="M1 1l5 5M6 1 1 6" />
          </svg>
        </div>
      </div>
      <Watermark />
    </aside>
  )
}

export default function App() {
  return (
    <div className='relative flex h-screen flex-col overflow-hidden bg-[#f0f0f0] font-["Open_Sans","Noto_Sans_CJK_SC",sans-serif] text-black'>
      <TitleBar />
      <div className="flex min-h-0 flex-1">
        <div className="w-[7px] shrink-0 border-r border-l-2 border-r-[#7c93b4] border-l-[#7b87a6] bg-[#b4cfee]" />
        <div className="flex min-w-0 flex-1 flex-col">
          <MenuBar />
          <Toolbars />
          <div className="flex min-h-0 flex-1">
            <div className="flex min-w-0 flex-1 flex-col">
              <div className="flex min-h-0 flex-1">
                <div className="flex w-[19px] shrink-0 flex-col">
                  <div className="flex h-[299px] flex-col items-center justify-between border-r border-b border-[#b4b4b4]">
                    <HGrip />
                    <Tools names={drawTools} />
                  </div>
                </div>
                <div className="flex min-w-0 flex-1 flex-col">
                  <Drawing />
                  <LayoutTabs />
                </div>
                <div className="flex w-[19px] shrink-0 flex-col border-r border-[#cfcfcf]">
                  <div className="flex h-[269px] shrink-0 flex-col items-center justify-between border-b border-[#b4b4b4]">
                    <HGrip />
                    <Tools names={modifyTools} />
                  </div>
                  <div className="mt-[3px] flex flex-col items-center border-b border-[#b4b4b4] pb-[2px]">
                    <HGrip />
                    <div className="h-[2px]" />
                    <Tools names={['front', 'back', 'above', 'under']} />
                  </div>
                </div>
                <div className="w-[21px] shrink-0">
                  <div className="flex w-[19px] flex-col items-center border-r border-b border-[#b4b4b4] pb-[2px]">
                    <HGrip />
                    {dimTools.map((group, i) => (
                      <div key={i} className="flex flex-col items-center">
                        {i > 0 && <HSep />}
                        <Tools names={group} />
                      </div>
                    ))}
                  </div>
                </div>
              </div>
              <div className="mt-[2px] mr-[2px] h-[3px] shrink-0 border-b-2 border-[#8f8f8f]" />
            </div>
            <PropertiesPalette />
          </div>
        </div>
        <div className="w-[8px] shrink-0 border-r-2 border-l border-r-[#a9abd0] border-l-[#8ba2c4] bg-[#b4cfee]" />
      </div>
      <div className="absolute top-[338px] right-0 flex h-[41px] w-[7px] items-center justify-center rounded-l-sm bg-[#3a4452]">
        <span className="mt-3 h-4 w-[3px] bg-[#3f8d62]" />
      </div>
    </div>
  )
}
